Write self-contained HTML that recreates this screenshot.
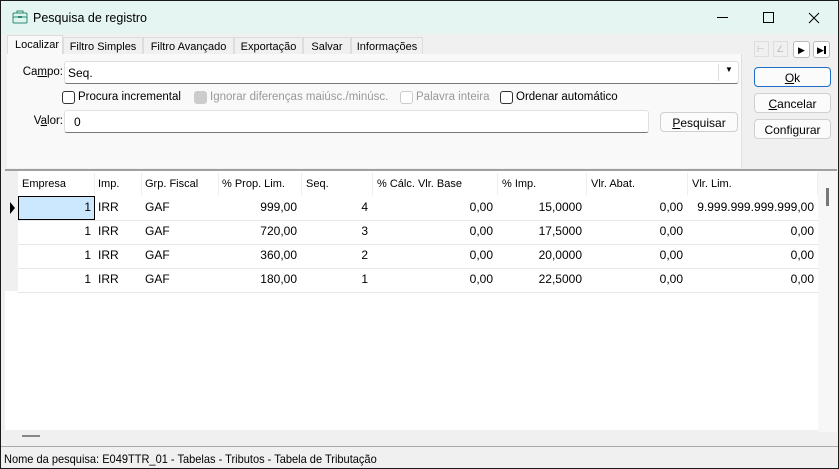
<!DOCTYPE html><html><head><style>
*{box-sizing:border-box;margin:0;padding:0}
body{width:839px;height:469px;overflow:hidden;font-family:"Liberation Sans",sans-serif;font-size:12px;color:#000;background:#1a1a1a;position:relative}
.win{position:absolute;left:1px;top:1px;width:837px;height:467px;background:#f0f0f0;overflow:hidden}
.title{position:absolute;left:0;top:0;width:837px;height:33px;background:#e5f5f1}
.abs{position:absolute}
.tab{position:absolute;top:36px;height:18px;background:#f0f0f0;border:1px solid #ddd;border-bottom:none;font-size:11px;padding:3px 0 0 0;text-align:center;white-space:nowrap}
.panel{position:absolute;left:6px;top:53px;width:735px;height:114px;background:#f9f9f9;border-right:1px solid #e0e0e0}
.inp{position:absolute;background:#fff;border:1px solid #e0e0e0;border-bottom:1px solid #777;border-radius:3px}
.cb{position:absolute;width:13px;height:13px;border:1px solid #333;border-radius:3px;background:#fff}
.btn{position:absolute;background:#fbfbfb;border:1px solid #d0d0d0;border-radius:4px;text-align:center;font-size:12px;padding-top:3px}
.grid{position:absolute;left:4px;top:168px;width:832px;height:261px;background:#fff;border-top:2px solid #a0a0a0}
.h,.c{position:absolute;font-size:11px;white-space:nowrap}
.c{font-size:12px}
.rl{position:absolute;left:13px;width:800px;height:1px;background:#e8e8e8}
.sep{position:absolute;top:2px;width:1px;height:22px;background:#eee}
</style></head><body><div class="win">
<div class="title">
<svg class="abs" style="left:11px;top:9px" width="16" height="14" viewBox="0 0 16 14"><rect x="1" y="3" width="14" height="10" rx="1" fill="#e0f4ee" stroke="#2a8a74"/><path d="M5 3V1h6v2M1 7h14" stroke="#2a8a74" fill="none"/><rect x="6" y="6" width="4" height="2" fill="#2a8a74"/></svg>
<div class="abs" style="left:32px;top:10px;font-size:12.5px">Pesquisa de registro</div>
<div class="abs" style="left:716px;top:16px;width:11px;height:1px;background:#000"></div>
<div class="abs" style="left:762px;top:11px;width:11px;height:11px;border:1px solid #000"></div>
<svg class="abs" style="left:807px;top:11px" width="12" height="12"><path d="M1 1L11 11M11 1L1 11" stroke="#000"/></svg>
</div>
<div class="abs" style="left:6px;top:34px;width:56px;height:20px;background:#f9f9f9;border:1px solid #ddd;border-bottom:none;font-size:11px;padding:3px 0 0 7px;white-space:nowrap">Localizar</div>
<div class="tab" style="left:62px;width:80px">Filtro Simples</div>
<div class="tab" style="left:142px;width:91px">Filtro Avançado</div>
<div class="tab" style="left:233px;width:69px">Exportação</div>
<div class="tab" style="left:302px;width:48px">Salvar</div>
<div class="tab" style="left:350px;width:72px">Informações</div>
<div class="panel"></div>
<div class="abs" style="left:10px;top:65px;width:52px;text-align:right;font-size:11.5px">Ca<u>m</u>po:</div>
<div class="inp" style="left:63px;top:60px;width:675px;height:23px"><span class="abs" style="left:3px;top:4px">Seq.</span><span class="abs" style="left:660px;top:3px;font-size:8px">▼</span><span class="abs" style="left:653px;top:2px;width:1px;height:17px;background:#ddd"></span></div>
<div class="cb" style="left:61px;top:90px"></div><div class="abs" style="left:77px;top:90px;font-size:11.5px">Procura incremental</div>
<div class="cb" style="left:193px;top:90px;background:#ccc;border-color:#ccc"></div><div class="abs" style="left:209px;top:90px;color:#999;font-size:11.5px">Ignorar diferenças maiúsc./minúsc.</div>
<div class="cb" style="left:399px;top:90px;border-color:#ccc"></div><div class="abs" style="left:415px;top:90px;color:#999;font-size:11.5px">Palavra inteira</div>
<div class="cb" style="left:499px;top:90px"></div><div class="abs" style="left:515px;top:90px;font-size:11.5px">Ordenar automático</div>
<div class="abs" style="left:10px;top:114px;width:52px;text-align:right;font-size:11.5px">V<u>a</u>lor:</div>
<div class="inp" style="left:63px;top:109px;width:585px;height:23px"><span class="abs" style="left:9px;top:4px">0</span></div>
<div class="btn" style="left:659px;top:111px;width:78px;height:20px"><u>P</u>esquisar</div>
<div class="btn" style="left:753px;top:66px;width:77px;height:20px;border-color:#1e6fc8"><u>O</u>k</div>
<div class="btn" style="left:753px;top:92px;width:77px;height:20px"><u>C</u>ancelar</div>
<div class="btn" style="left:753px;top:118px;width:77px;height:20px">Confi<u>g</u>urar</div>
<div class="abs" style="left:753px;top:40px;width:15px;height:16px;border:1px solid #ddd;color:#bbb;font-size:9px;padding:2px">⊢</div>
<div class="abs" style="left:772px;top:40px;width:15px;height:16px;border:1px solid #ddd;color:#bbb;font-size:9px;padding:2px">∠</div>
<div class="abs" style="left:792px;top:40px;width:17px;height:17px;border:1px solid #bbb;border-radius:3px;background:#fff;font-size:9px;padding:3px 0 0 4px">▶</div>
<div class="abs" style="left:812px;top:40px;width:17px;height:17px;border:1px solid #bbb;border-radius:3px;background:#fff;font-size:9px;padding:3px 0 0 3px">▶<span style="display:inline-block;width:2px;height:8px;background:#000;vertical-align:-1px"></span></div>
<div class="grid">
<div class="abs" style="left:0;top:0;width:13px;height:120px;background:#f0f0f0"></div>
<div class="abs" style="left:813px;top:0;width:19px;height:261px;background:#f7f7f7"></div>
<div class="abs" style="left:821px;top:17px;width:3px;height:18px;background:#777"></div>
<div class="sep" style="left:89px"></div><div class="sep" style="left:136px"></div><div class="sep" style="left:213px"></div><div class="sep" style="left:296px"></div><div class="sep" style="left:367px"></div><div class="sep" style="left:492px"></div><div class="sep" style="left:581px"></div><div class="sep" style="left:682px"></div><div class="sep" style="left:812px"></div>
<div class="h" style="left:17px;top:7px">Empresa</div><div class="h" style="left:93px;top:7px">Imp.</div><div class="h" style="left:140px;top:7px">Grp. Fiscal</div><div class="h" style="left:217px;top:7px">% Prop. Lim.</div><div class="h" style="left:301px;top:7px">Seq.</div><div class="h" style="left:372px;top:7px">% Cálc. Vlr. Base</div><div class="h" style="left:497px;top:7px">% Imp.</div><div class="h" style="left:586px;top:7px">Vlr. Abat.</div><div class="h" style="left:687px;top:7px">Vlr. Lim.</div>
<div class="abs" style="left:13px;top:25px;width:77px;height:24px;background:#cce8ff;border:1px solid #000"></div>
<div class="abs" style="left:5px;top:31px;width:0;height:0;border-left:5px solid #000;border-top:6px solid transparent;border-bottom:6px solid transparent"></div>
<div class="rl" style="top:49px"></div><div class="rl" style="top:73px"></div><div class="rl" style="top:97px"></div><div class="rl" style="top:121px"></div>
</div>
<div class="abs" style="left:21px;top:434px;width:18px;height:2px;background:#888"></div>
<div class="abs" style="left:0;top:445px;width:837px;height:1px;background:#aaa"></div>
<div class="abs" style="left:3px;top:451px;font-size:12px;transform:scaleX(.92);transform-origin:left;white-space:nowrap">Nome da pesquisa: E049TTR_01 - Tabelas - Tributos - Tabela de Tributação</div>
</div>
<style>.r{position:absolute;font-size:12px;text-align:right}</style>
<div style="position:absolute;left:1px;top:0px">
<div class="r" style="left:40px;top:200px;width:50px">1</div><div class="c" style="left:97px;top:200px">IRR</div><div class="c" style="left:144px;top:200px">GAF</div><div class="r" style="left:220px;top:200px;width:76px">999,00</div><div class="r" style="left:310px;top:200px;width:57px">4</div><div class="r" style="left:400px;top:200px;width:92px">0,00</div><div class="r" style="left:500px;top:200px;width:81px">15,0000</div><div class="r" style="left:600px;top:200px;width:82px">0,00</div><div class="r" style="left:690px;top:200px;width:123px">9.999.999.999.999,00</div>
<div class="r" style="left:40px;top:224px;width:50px">1</div><div class="c" style="left:97px;top:224px">IRR</div><div class="c" style="left:144px;top:224px">GAF</div><div class="r" style="left:220px;top:224px;width:76px">720,00</div><div class="r" style="left:310px;top:224px;width:57px">3</div><div class="r" style="left:400px;top:224px;width:92px">0,00</div><div class="r" style="left:500px;top:224px;width:81px">17,5000</div><div class="r" style="left:600px;top:224px;width:82px">0,00</div><div class="r" style="left:690px;top:224px;width:123px">0,00</div>
<div class="r" style="left:40px;top:248px;width:50px">1</div><div class="c" style="left:97px;top:248px">IRR</div><div class="c" style="left:144px;top:248px">GAF</div><div class="r" style="left:220px;top:248px;width:76px">360,00</div><div class="r" style="left:310px;top:248px;width:57px">2</div><div class="r" style="left:400px;top:248px;width:92px">0,00</div><div class="r" style="left:500px;top:248px;width:81px">20,0000</div><div class="r" style="left:600px;top:248px;width:82px">0,00</div><div class="r" style="left:690px;top:248px;width:123px">0,00</div>
<div class="r" style="left:40px;top:272px;width:50px">1</div><div class="c" style="left:97px;top:272px">IRR</div><div class="c" style="left:144px;top:272px">GAF</div><div class="r" style="left:220px;top:272px;width:76px">180,00</div><div class="r" style="left:310px;top:272px;width:57px">1</div><div class="r" style="left:400px;top:272px;width:92px">0,00</div><div class="r" style="left:500px;top:272px;width:81px">22,5000</div><div class="r" style="left:600px;top:272px;width:82px">0,00</div><div class="r" style="left:690px;top:272px;width:123px">0,00</div>
</div>
</body></html>
